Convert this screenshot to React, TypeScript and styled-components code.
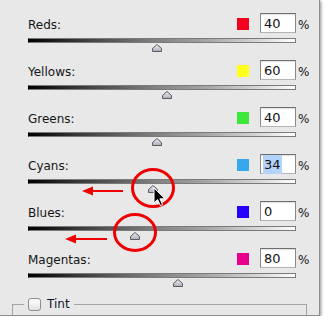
import React from 'react';
import styled, { createGlobalStyle } from 'styled-components';

const GlobalStyle = createGlobalStyle`
    body {
        margin: 0;
        background: #ffffff;
        font-family: "DejaVu Sans", "Liberation Sans", sans-serif;
    }
`;

const Panel = styled.div`
    position: relative;
    width: 320px;
    height: 316px;
    padding: 13px 8px 0 12px;
    box-sizing: border-box;
    overflow: hidden;
    background: #e8e8e8;
    border-right: 1px solid #8c8c8c;
    border-bottom: 1px solid #8c8c8c;
    box-shadow: 1px 1px 3px rgba(0, 0, 0, 0.45);
`;

const Rows = styled.div`
    padding-left: 16px;
`;

const Row = styled.div`
    display: grid;
    grid-template-columns: 1fr 12px 47px 15px;
    grid-template-rows: 25px 5px 17px;
`;

const Label = styled.span`
    font-size: 12px;
    line-height: 24px;
    color: #151515;
`;

const Swatch = styled.span<{ $color: string }>`
    width: 12px;
    height: 12px;
    margin-top: 5px;
    background: ${({ $color }) => $color};
`;

const ValueBox = styled.div`
    height: 20px;
    width: 36px;
    margin-left: 11px;
    box-sizing: border-box;
    display: flex;
    align-items: center;
    padding-left: 2px;
    background: #ffffff;
    border: 1px solid #8a8a8a;
    border-top-color: #6e6e6e;
    border-bottom-color: #b4b4b4;
    box-shadow: inset 0 1px 1px rgba(0, 0, 0, 0.12);
    font-size: 13px;
    color: #111111;
`;

const Selected = styled.span<{ $on: boolean }>`
    padding: 2px 1px;
    background: ${({ $on }) => ($on ? '#b3d3fb' : 'transparent')};
`;

const Percent = styled.span`
    margin-left: 2px;
    font-size: 12px;
    line-height: 24px;
    color: #151515;
`;

const Track = styled.div`
    grid-column: 1 / 4;
    position: relative;
    height: 5px;
    box-sizing: border-box;
    border: 1px solid #7a7a7a;
    border-left-color: #000;
    background: linear-gradient(
        to right,
        #000000 0%,
        #3c3c3c 20%,
        #7e7e7e 46%,
        #a4a4a4 66%,
        #d4d4d4 85%,
        #ffffff 100%
    );
`;

const Thumb = styled.svg`
    position: absolute;
    top: 5px;
    width: 10px;
    height: 8px;
`;

const Group = styled.fieldset`
    margin: 2px 4px 0 0;
    padding: 0 10px 0 11px;
    height: 40px;
    border: 1px solid #a4a4a4;
`;

const Legend = styled.legend`
    display: flex;
    align-items: center;
    gap: 6px;
    padding: 0 4px;
    font-size: 12px;
    color: #10162a;
`;

const CheckBox = styled.span`
    width: 13px;
    height: 13px;
    box-sizing: border-box;
    border: 1px solid #8e8e8e;
    border-radius: 3px;
    background: linear-gradient(#ffffff, #e2e2e2);
`;

const Marks = styled.svg`
    position: absolute;
    left: 0;
    top: 0;
    pointer-events: none;
`;

type Channel = { name: string; color: string; value: number };

const channels: Channel[] = [
    { name: 'Reds', color: '#f2001e', value: 40 },
    { name: 'Yellows', color: '#ffff1e', value: 60 },
    { name: 'Greens', color: '#3be83a', value: 40 },
    { name: 'Cyans', color: '#36a8ee', value: 34 },
    { name: 'Blues', color: '#2400ff', value: 0 },
    { name: 'Magentas', color: '#e8008a', value: 80 },
];

const TRACK = 268;

function ChannelRow({ name, color, value }: Channel): JSX.Element {
    const x = ((value + 200) / 500) * TRACK - 6;
    return (
        <Row>
            <Label>{name}:</Label>
            <Swatch $color={color} />
            <ValueBox>
                <Selected $on={name === 'Cyans'}>{value}</Selected>
            </ValueBox>
            <Percent>%</Percent>
            <Track>
                <Thumb viewBox="0 0 10 8" style={{ left: x }}>
                    <defs>
                        <linearGradient id="tg" x1="0" y1="0" x2="0" y2="1">
                            <stop offset="0" stopColor="#eef0f4" />
                            <stop offset="1" stopColor="#a9aebb" />
                        </linearGradient>
                    </defs>
                    <path d="M5 0.5 L9.5 4.5 V7.5 H0.5 V4.5 Z" fill="url(#tg)" stroke="#5a5a5a" strokeWidth="1" />
                </Thumb>
            </Track>
        </Row>
    );
}

export default function App(): JSX.Element {
    return (
        <>
            <GlobalStyle />
            <Panel>
                <Rows>
                    {channels.map((c) => (
                        <ChannelRow key={c.name} {...c} />
                    ))}
                </Rows>
                <Group>
                    <Legend>
                        <CheckBox />
                        Tint
                    </Legend>
                </Group>
                <Marks width="320" height="316" viewBox="0 0 320 316">
                    <g fill="none" stroke="#ee0000" strokeWidth="3">
                        <ellipse cx="153" cy="188" rx="20.5" ry="18.5" />
                        <ellipse cx="135" cy="232.5" rx="20.5" ry="18" />
                        <line x1="123" y1="191" x2="90" y2="191" strokeWidth="2" />
                        <line x1="107" y1="239" x2="73" y2="239" strokeWidth="2" />
                    </g>
                    <g fill="#ee0000">
                        <path d="M82 191 L93 186.5 L93 195.5 Z" />
                        <path d="M65 239 L76 234.5 L76 243.5 Z" />
                    </g>
                    <path
                        d="M154 188 L154 203 L157.6 199.6 L160.4 205.6 L162.6 204.6 L159.9 198.8 L165 198.8 Z"
                        fill="#000"
                        stroke="#fff"
                        strokeWidth="1"
                        strokeLinejoin="round"
                    />
                </Marks>
            </Panel>
        </>
    );
}
